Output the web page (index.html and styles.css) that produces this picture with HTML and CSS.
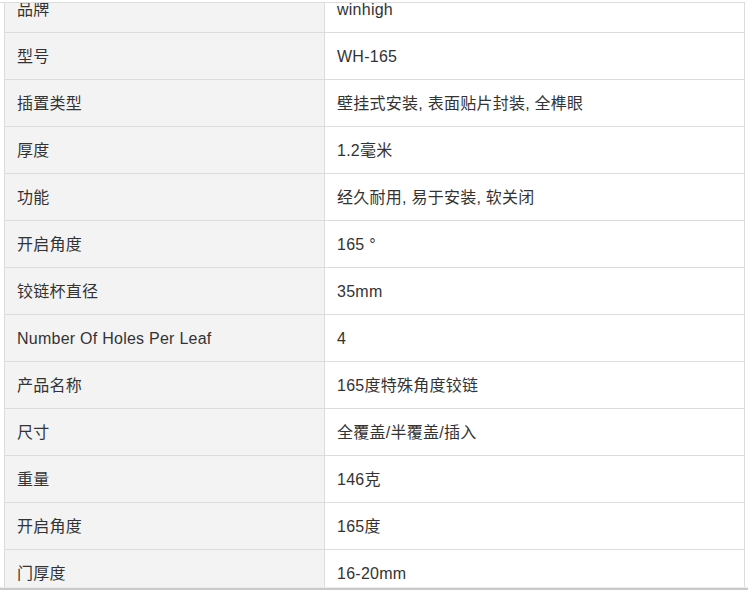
FILE: index.html
```html
<!DOCTYPE html>
<html lang="zh">
<head>
<meta charset="utf-8">
<title>产品参数</title>
<link rel="stylesheet" href="styles.css">
</head>
<body>
<div class="viewport">
  <div class="specs">
    <div class="row"><div class="key">品牌</div><div class="val">winhigh</div></div>
    <div class="row"><div class="key">型号</div><div class="val">WH-165</div></div>
    <div class="row"><div class="key">插置类型</div><div class="val">壁挂式安装, 表面贴片封装, 全榫眼</div></div>
    <div class="row"><div class="key">厚度</div><div class="val">1.2毫米</div></div>
    <div class="row"><div class="key">功能</div><div class="val">经久耐用, 易于安装, 软关闭</div></div>
    <div class="row"><div class="key">开启角度</div><div class="val">165 °</div></div>
    <div class="row"><div class="key">铰链杯直径</div><div class="val">35mm</div></div>
    <div class="row"><div class="key">Number Of Holes Per Leaf</div><div class="val">4</div></div>
    <div class="row"><div class="key">产品名称</div><div class="val">165度特殊角度铰链</div></div>
    <div class="row"><div class="key">尺寸</div><div class="val">全覆盖/半覆盖/插入</div></div>
    <div class="row"><div class="key">重量</div><div class="val">146克</div></div>
    <div class="row"><div class="key">开启角度</div><div class="val">165度</div></div>
    <div class="row"><div class="key">门厚度</div><div class="val">16-20mm</div></div>
  </div>
</div>
<div class="edge"></div>
</body>
</html>
```
FILE: styles.css
```css
html, body {
  margin: 0;
  padding: 0;
  background: #fff;
}
body {
  padding-top: 2px;
  font-family: "Liberation Sans", Arial, "Noto Sans CJK SC", sans-serif;
  font-size: 16px;
  color: #333;
}
.viewport {
  width: 745px;
  height: 584px;
  border-top: 1px solid #dcdcdc;
  overflow: hidden;
}
.specs {
  margin-top: -18px;
  margin-left: 4px;
  width: 741px;
  border-left: 1px solid #dcdcdc;
  border-top: 1px solid #dcdcdc;
  display: grid;
  grid-template-columns: 320px 420px;
}
.row {
  display: contents;
}
.key, .val {
  box-sizing: border-box;
  height: 47px;
  border-right: 1px solid #dcdcdc;
  border-bottom: 1px solid #dcdcdc;
  display: flex;
  align-items: center;
  padding: 2px 12px 0;
  line-height: 1;
  letter-spacing: 0.25px;
}
.key {
  background: #f3f3f3;
}
.val {
  background: #fff;
}
.edge {
  height: 3px;
  border-top: 1px solid #ececec;
  background: #c9c9c9;
  box-sizing: border-box;
}
```
